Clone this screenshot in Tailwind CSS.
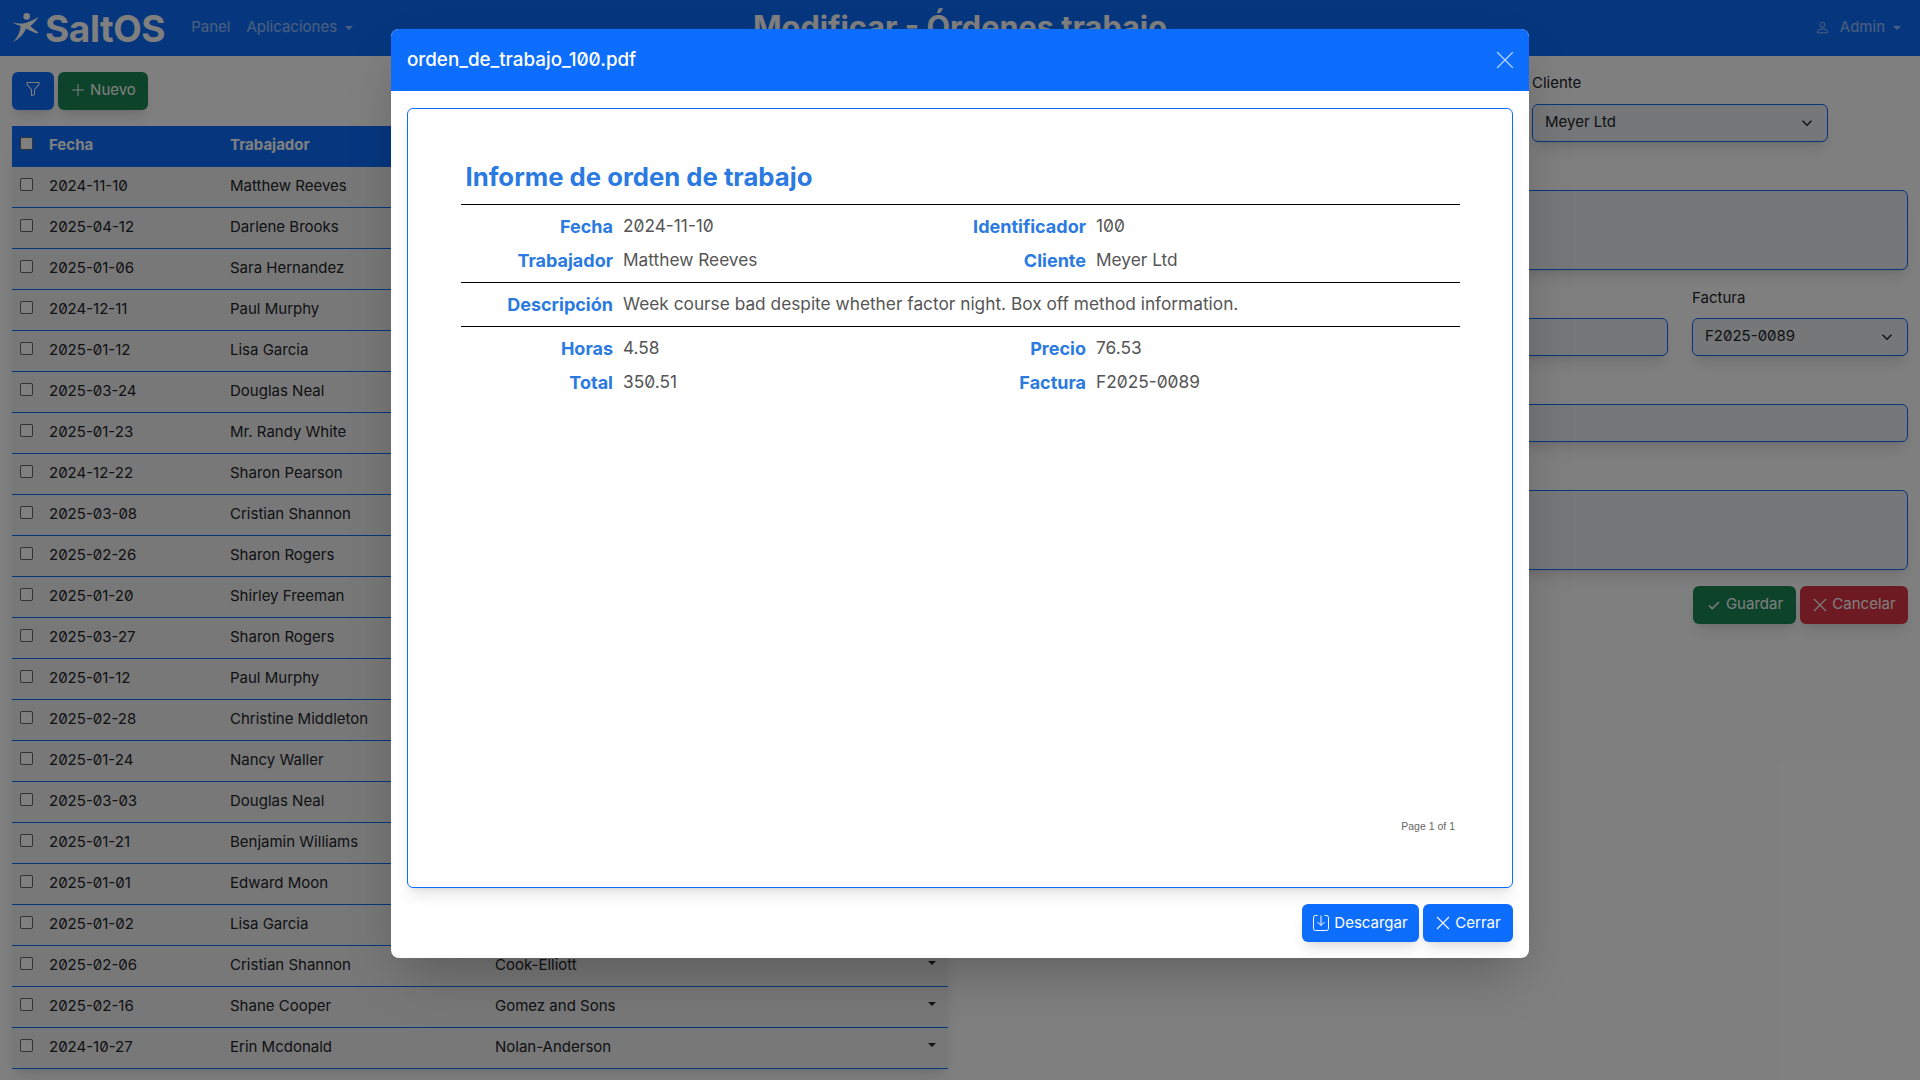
<!DOCTYPE html>
<html lang="es">
<head>
<meta charset="utf-8">
<title>SaltOS</title>
<script src="https://cdn.jsdelivr.net/npm/@tailwindcss/browser@4"></script>
</head>
<body class="relative h-[1080px] w-[1920px] overflow-hidden bg-white font-['Inter',sans-serif] text-[15px] text-[#212529] slashed-zero [font-feature-settings:'zero']">
<nav class="relative flex h-14 items-center bg-[#0d6efd] pl-3 pr-[19px]">
  <div class="flex items-center gap-[6px]">
    <svg viewBox="0 0 27 30" class="h-[30px] w-[27px] fill-white"><circle cx="14.7" cy="3.4" r="3.3"/><path d="M0 9 C6 11 12 11 15 9.5 C19 8 23 6 26.5 4 C24 8 21 11 18.5 13 C20 15 23 17 26.5 19.5 L24.5 20.5 C21 19 17 17 14 15.5 C12 21 7 26 1 29 C5 25 8.5 19 8.5 13 C6 12 3 11 0 9Z"/></svg>
    <span class="mt-[1px] text-[37px] leading-none font-bold tracking-[-0.4px] text-white">SaltOS</span>
  </div>
  <a class="mb-[1px] ml-[26px] text-white/55">Panel</a>
  <a class="mb-[1px] ml-4 flex items-center text-white/55">Aplicaciones<span class="ml-2 h-0 w-0 border-x-[4.5px] border-t-[4.5px] border-x-transparent border-t-white/55"></span></a>
  <h1 class="absolute left-0 right-0 top-[4px] text-center text-[30.7px] font-bold text-white">Modificar - Órdenes trabajo</h1>
  <a class="mb-[1px] ml-auto flex items-center text-white/55">
    <svg viewBox="0 0 16 16" class="mr-[10px] h-[15px] w-[15px] fill-white/55"><path d="M8 8a3 3 0 1 0 0-6 3 3 0 0 0 0 6Zm2-3a2 2 0 1 1-4 0 2 2 0 0 1 4 0Zm4 8c0 1-1 1-1 1H3s-1 0-1-1 1-4 6-4 6 3 6 4Zm-1-.004c-.001-.246-.154-.986-.832-1.664C11.516 10.68 10.289 10 8 10c-2.29 0-3.516.68-4.168 1.332-.678.678-.83 1.418-.832 1.664h10Z"/></svg>
    Admin<span class="ml-2 h-0 w-0 border-x-[4.5px] border-t-[4.5px] border-x-transparent border-t-white/55"></span>
  </a>
</nav>

<main class="flex items-start px-3">
  <section class="w-[936px]">
    <div class="mt-4 flex gap-1">
      <button class="flex h-[38px] w-[42px] items-center justify-center rounded-md bg-[#0d6efd] shadow-lg">
        <svg viewBox="0 0 16 16" class="mb-1 h-4 w-4 fill-white"><path d="M1.5 1.5A.5.5 0 0 1 2 1h12a.5.5 0 0 1 .5.5v2a.5.5 0 0 1-.128.334L10 8.692V13.5a.5.5 0 0 1-.342.474l-3 1A.5.5 0 0 1 6 14.5V8.692L1.628 3.834A.5.5 0 0 1 1.5 3.5v-2Zm1 .5v1.308l4.372 4.858A.5.5 0 0 1 7 8.5v5.306l2-.666V8.5a.5.5 0 0 1 .128-.334L13.5 3.308V2h-11Z"/></svg>
      </button>
      <button class="flex h-[38px] w-[90px] items-center justify-center gap-1 rounded-md bg-[#198754] pb-[2px] text-white shadow-lg">
        <svg viewBox="0 0 16 16" class="h-4 w-4 fill-white"><path d="M8 2a.5.5 0 0 1 .5.5v5h5a.5.5 0 0 1 0 1h-5v5a.5.5 0 0 1-1 0v-5h-5a.5.5 0 0 1 0-1h5v-5A.5.5 0 0 1 8 2Z"/></svg>Nuevo
      </button>
    </div>
    <div class="mt-4 shadow-lg">
      <div class="grid h-[41px] grid-cols-[37px_181px_265px_1fr_32px] items-center bg-[#0d6efd] pb-[3px] font-bold text-white">
        <input type="checkbox" class="mb-[4px] ml-2 block h-[13px] w-[13px] appearance-none rounded-[2px] border border-black/60 bg-white"><span>Fecha</span><span>Trabajador</span><span>Cliente</span><span></span>
      </div>
      <div class="bg-[#f0f0f0]">
        <div class="grid h-[41px] grid-cols-[37px_181px_265px_1fr_32px] items-center border-b border-[#0d6efd] pb-[1px]"><input type="checkbox" class="mb-[4px] ml-2 block h-[13px] w-[13px] appearance-none rounded-[2px] border border-black/60 bg-white"><span>2024-11-10</span><span>Matthew Reeves</span><span></span><span></span></div>
        <div class="grid h-[41px] grid-cols-[37px_181px_265px_1fr_32px] items-center border-b border-[#0d6efd] pb-[1px]"><input type="checkbox" class="mb-[4px] ml-2 block h-[13px] w-[13px] appearance-none rounded-[2px] border border-black/60 bg-white"><span>2025-04-12</span><span>Darlene Brooks</span><span></span><span></span></div>
        <div class="grid h-[41px] grid-cols-[37px_181px_265px_1fr_32px] items-center border-b border-[#0d6efd] pb-[1px]"><input type="checkbox" class="mb-[4px] ml-2 block h-[13px] w-[13px] appearance-none rounded-[2px] border border-black/60 bg-white"><span>2025-01-06</span><span>Sara Hernandez</span><span></span><span></span></div>
        <div class="grid h-[41px] grid-cols-[37px_181px_265px_1fr_32px] items-center border-b border-[#0d6efd] pb-[1px]"><input type="checkbox" class="mb-[4px] ml-2 block h-[13px] w-[13px] appearance-none rounded-[2px] border border-black/60 bg-white"><span>2024-12-11</span><span>Paul Murphy</span><span></span><span></span></div>
        <div class="grid h-[41px] grid-cols-[37px_181px_265px_1fr_32px] items-center border-b border-[#0d6efd] pb-[1px]"><input type="checkbox" class="mb-[4px] ml-2 block h-[13px] w-[13px] appearance-none rounded-[2px] border border-black/60 bg-white"><span>2025-01-12</span><span>Lisa Garcia</span><span></span><span></span></div>
        <div class="grid h-[41px] grid-cols-[37px_181px_265px_1fr_32px] items-center border-b border-[#0d6efd] pb-[1px]"><input type="checkbox" class="mb-[4px] ml-2 block h-[13px] w-[13px] appearance-none rounded-[2px] border border-black/60 bg-white"><span>2025-03-24</span><span>Douglas Neal</span><span></span><span></span></div>
        <div class="grid h-[41px] grid-cols-[37px_181px_265px_1fr_32px] items-center border-b border-[#0d6efd] pb-[1px]"><input type="checkbox" class="mb-[4px] ml-2 block h-[13px] w-[13px] appearance-none rounded-[2px] border border-black/60 bg-white"><span>2025-01-23</span><span>Mr. Randy White</span><span></span><span></span></div>
        <div class="grid h-[41px] grid-cols-[37px_181px_265px_1fr_32px] items-center border-b border-[#0d6efd] pb-[1px]"><input type="checkbox" class="mb-[4px] ml-2 block h-[13px] w-[13px] appearance-none rounded-[2px] border border-black/60 bg-white"><span>2024-12-22</span><span>Sharon Pearson</span><span></span><span></span></div>
        <div class="grid h-[41px] grid-cols-[37px_181px_265px_1fr_32px] items-center border-b border-[#0d6efd] pb-[1px]"><input type="checkbox" class="mb-[4px] ml-2 block h-[13px] w-[13px] appearance-none rounded-[2px] border border-black/60 bg-white"><span>2025-03-08</span><span>Cristian Shannon</span><span></span><span></span></div>
        <div class="grid h-[41px] grid-cols-[37px_181px_265px_1fr_32px] items-center border-b border-[#0d6efd] pb-[1px]"><input type="checkbox" class="mb-[4px] ml-2 block h-[13px] w-[13px] appearance-none rounded-[2px] border border-black/60 bg-white"><span>2025-02-26</span><span>Sharon Rogers</span><span></span><span></span></div>
        <div class="grid h-[41px] grid-cols-[37px_181px_265px_1fr_32px] items-center border-b border-[#0d6efd] pb-[1px]"><input type="checkbox" class="mb-[4px] ml-2 block h-[13px] w-[13px] appearance-none rounded-[2px] border border-black/60 bg-white"><span>2025-01-20</span><span>Shirley Freeman</span><span></span><span></span></div>
        <div class="grid h-[41px] grid-cols-[37px_181px_265px_1fr_32px] items-center border-b border-[#0d6efd] pb-[1px]"><input type="checkbox" class="mb-[4px] ml-2 block h-[13px] w-[13px] appearance-none rounded-[2px] border border-black/60 bg-white"><span>2025-03-27</span><span>Sharon Rogers</span><span></span><span></span></div>
        <div class="grid h-[41px] grid-cols-[37px_181px_265px_1fr_32px] items-center border-b border-[#0d6efd] pb-[1px]"><input type="checkbox" class="mb-[4px] ml-2 block h-[13px] w-[13px] appearance-none rounded-[2px] border border-black/60 bg-white"><span>2025-01-12</span><span>Paul Murphy</span><span></span><span></span></div>
        <div class="grid h-[41px] grid-cols-[37px_181px_265px_1fr_32px] items-center border-b border-[#0d6efd] pb-[1px]"><input type="checkbox" class="mb-[4px] ml-2 block h-[13px] w-[13px] appearance-none rounded-[2px] border border-black/60 bg-white"><span>2025-02-28</span><span>Christine Middleton</span><span></span><span></span></div>
        <div class="grid h-[41px] grid-cols-[37px_181px_265px_1fr_32px] items-center border-b border-[#0d6efd] pb-[1px]"><input type="checkbox" class="mb-[4px] ml-2 block h-[13px] w-[13px] appearance-none rounded-[2px] border border-black/60 bg-white"><span>2025-01-24</span><span>Nancy Waller</span><span></span><span></span></div>
        <div class="grid h-[41px] grid-cols-[37px_181px_265px_1fr_32px] items-center border-b border-[#0d6efd] pb-[1px]"><input type="checkbox" class="mb-[4px] ml-2 block h-[13px] w-[13px] appearance-none rounded-[2px] border border-black/60 bg-white"><span>2025-03-03</span><span>Douglas Neal</span><span></span><span></span></div>
        <div class="grid h-[41px] grid-cols-[37px_181px_265px_1fr_32px] items-center border-b border-[#0d6efd] pb-[1px]"><input type="checkbox" class="mb-[4px] ml-2 block h-[13px] w-[13px] appearance-none rounded-[2px] border border-black/60 bg-white"><span>2025-01-21</span><span>Benjamin Williams</span><span></span><span></span></div>
        <div class="grid h-[41px] grid-cols-[37px_181px_265px_1fr_32px] items-center border-b border-[#0d6efd] pb-[1px]"><input type="checkbox" class="mb-[4px] ml-2 block h-[13px] w-[13px] appearance-none rounded-[2px] border border-black/60 bg-white"><span>2025-01-01</span><span>Edward Moon</span><span></span><span></span></div>
        <div class="grid h-[41px] grid-cols-[37px_181px_265px_1fr_32px] items-center border-b border-[#0d6efd] pb-[1px]"><input type="checkbox" class="mb-[4px] ml-2 block h-[13px] w-[13px] appearance-none rounded-[2px] border border-black/60 bg-white"><span>2025-01-02</span><span>Lisa Garcia</span><span></span><span></span></div>
        <div class="grid h-[41px] grid-cols-[37px_181px_265px_1fr_32px] items-center border-b border-[#0d6efd] pb-[1px]"><input type="checkbox" class="mb-[4px] ml-2 block h-[13px] w-[13px] appearance-none rounded-[2px] border border-black/60 bg-white"><span>2025-02-06</span><span>Cristian Shannon</span><span>Cook-Elliott</span><span class="mb-[6px] block h-0 w-0 justify-self-center border-x-[4.5px] border-t-[4.5px] border-x-transparent border-t-[#212529]"></span></div>
        <div class="grid h-[41px] grid-cols-[37px_181px_265px_1fr_32px] items-center border-b border-[#0d6efd] pb-[1px]"><input type="checkbox" class="mb-[4px] ml-2 block h-[13px] w-[13px] appearance-none rounded-[2px] border border-black/60 bg-white"><span>2025-02-16</span><span>Shane Cooper</span><span>Gomez and Sons</span><span class="mb-[6px] block h-0 w-0 justify-self-center border-x-[4.5px] border-t-[4.5px] border-x-transparent border-t-[#212529]"></span></div>
        <div class="grid h-[41px] grid-cols-[37px_181px_265px_1fr_32px] items-center border-b border-[#0d6efd] pb-[1px]"><input type="checkbox" class="mb-[4px] ml-2 block h-[13px] w-[13px] appearance-none rounded-[2px] border border-black/60 bg-white"><span>2024-10-27</span><span>Erin Mcdonald</span><span>Nolan-Anderson</span><span class="mb-[6px] block h-0 w-0 justify-self-center border-x-[4.5px] border-t-[4.5px] border-x-transparent border-t-[#212529]"></span></div>
      </div>
    </div>
  </section>

  <section class="ml-[24px] grid w-[936px] shrink-0 grid-cols-12 gap-x-6 pt-[15px]">
    <div class="col-span-12 ml-[560px] w-[296px]">
      <label class="mb-[9px] block leading-6">Cliente</label>
      <div class="flex h-[38px] items-center justify-between rounded-md border border-[#0d6efd] bg-[#eceef1] pb-[1px] pl-3 pr-[14px] shadow-lg">Meyer Ltd<svg viewBox="0 0 16 16" class="h-3 w-3 fill-none stroke-[#212529] stroke-2"><path d="M2 5l6 6 6-6"/></svg></div>
    </div>
    <div class="col-span-12 mt-[48px] h-[80px] rounded-md border border-[#0d6efd] bg-[#eceef1] shadow-lg"></div>
    <div class="col-span-9 mt-[48px] h-[38px] rounded-md border border-[#0d6efd] bg-[#eceef1] shadow-lg"></div>
    <div class="col-span-3 mt-[16px]">
      <label class="mb-[8px] block leading-6">Factura</label>
      <div class="flex h-[38px] items-center justify-between rounded-md border border-[#0d6efd] bg-[#eceef1] pb-[1px] pl-3 pr-[14px] shadow-lg">F2025-0089<svg viewBox="0 0 16 16" class="h-3 w-3 fill-none stroke-[#212529] stroke-2"><path d="M2 5l6 6 6-6"/></svg></div>
    </div>
    <div class="col-span-12 mt-[48px] h-[38px] rounded-md border border-[#0d6efd] bg-[#eceef1] shadow-lg"></div>
    <div class="col-span-12 mt-[48px] h-[80px] rounded-md border border-[#0d6efd] bg-[#eceef1] shadow-lg"></div>
    <div class="col-span-12 mt-4 flex justify-end gap-1">
      <button class="flex h-[38px] w-[103px] items-center justify-center gap-1 rounded-md bg-[#198754] pb-[1px] text-white shadow-lg"><svg viewBox="0 0 16 16" class="h-4 w-4 fill-none stroke-white stroke-[1.6]"><path d="M3 8.5l3.2 3.2L13 5"/></svg>Guardar</button>
      <button class="flex h-[38px] w-[108px] items-center justify-center gap-1 rounded-md bg-[#dc3545] pb-[1px] text-white shadow-lg"><svg viewBox="0 0 16 16" class="h-4 w-4 fill-none stroke-white stroke-[1.1]"><path d="M2 2l12 12M14 2L2 14"/></svg>Cancelar</button>
    </div>
  </section>
</main>

<div class="absolute inset-0 bg-black/50"></div>

<div class="absolute left-[391px] top-[29px] flex h-[929px] w-[1138px] flex-col rounded-lg bg-white shadow-2xl">
  <header class="flex h-[62px] items-center justify-between rounded-t-lg bg-[#0d6efd] pl-4 pr-[15px] text-white">
    <h2 class="text-[18.8px] font-medium">orden_de_trabajo_100.pdf</h2>
    <svg viewBox="0 0 16 16" class="h-[18px] w-[18px] fill-none stroke-white/75 stroke-[1.2]"><path d="M1 1l14 14M15 1L1 15"/></svg>
  </header>
  <div class="relative mx-4 mt-[17px] h-[780px] rounded-md border border-[#0d6efd] bg-white text-[17.3px] shadow-lg">
    <h3 class="absolute left-[57.5px] top-[49px] text-[25.7px] font-bold text-[#2a7ae2]">Informe de orden de trabajo</h3>
    <div class="absolute left-[53px] right-[52px] top-[95px] border-b border-black"></div>
    <div class="absolute left-[53px] right-[52px] top-[173px] border-b border-black"></div>
    <div class="absolute left-[53px] right-[52px] top-[217px] border-b border-black"></div>
    <dl class="absolute left-[53px] top-[88px] grid w-[998px] grid-cols-[152px_295px_158px_1fr] gap-x-[10px] text-[#555]">
      <dt class="mt-4 h-[34px] text-right text-[18px] font-bold text-[#2a7ae2]">Fecha</dt><dd class="mt-4 h-[34px]">2024-11-10</dd>
      <dt class="mt-4 h-[34px] text-right text-[18px] font-bold text-[#2a7ae2]">Identificador</dt><dd class="mt-4 h-[34px]">100</dd>
      <dt class="h-[34px] text-right text-[18px] font-bold text-[#2a7ae2]">Trabajador</dt><dd class="h-[34px]">Matthew Reeves</dd>
      <dt class="h-[34px] text-right text-[18px] font-bold text-[#2a7ae2]">Cliente</dt><dd class="h-[34px]">Meyer Ltd</dd>
      <dt class="mt-[10px] h-[34px] text-right text-[18px] font-bold text-[#2a7ae2]">Descripción</dt><dd class="col-span-3 mt-[10px] h-[34px] whitespace-nowrap">Week course bad despite whether factor night. Box off method information.</dd>
      <dt class="mt-[10px] h-[34px] text-right text-[18px] font-bold text-[#2a7ae2]">Horas</dt><dd class="mt-[10px] h-[34px]">4.58</dd>
      <dt class="mt-[10px] h-[34px] text-right text-[18px] font-bold text-[#2a7ae2]">Precio</dt><dd class="mt-[10px] h-[34px]">76.53</dd>
      <dt class="h-[34px] text-right text-[18px] font-bold text-[#2a7ae2]">Total</dt><dd class="h-[34px]">350.51</dd>
      <dt class="h-[34px] text-right text-[18px] font-bold text-[#2a7ae2]">Factura</dt><dd class="h-[34px]">F2025-0089</dd>
    </dl>
    <span class="absolute right-[57px] top-[710px] font-['Liberation_Sans',sans-serif] text-[10.5px] text-[#666]">Page 1 of 1</span>
  </div>
  <footer class="mx-4 mt-4 flex justify-end gap-1">
    <button class="flex h-[38px] w-[117px] items-center justify-center gap-[5px] rounded-md bg-[#0d6efd] text-white shadow-lg"><svg viewBox="0 0 16 16" class="h-4 w-4 fill-none stroke-white stroke-[1]"><path d="M4.5 .5H2.5A2 2 0 0 0 .5 2.5v11a2 2 0 0 0 2 2h11a2 2 0 0 0 2-2v-11a2 2 0 0 0-2-2H11.5M8 .5v10M4.5 7l3.5 3.5L11.5 7"/></svg>Descargar</button>
    <button class="flex h-[38px] w-[90px] items-center justify-center gap-1 rounded-md bg-[#0d6efd] text-white shadow-lg"><svg viewBox="0 0 16 16" class="h-4 w-4 fill-none stroke-white stroke-[1.1]"><path d="M2 2l12 12M14 2L2 14"/></svg>Cerrar</button>
  </footer>
</div>
</body>
</html>
